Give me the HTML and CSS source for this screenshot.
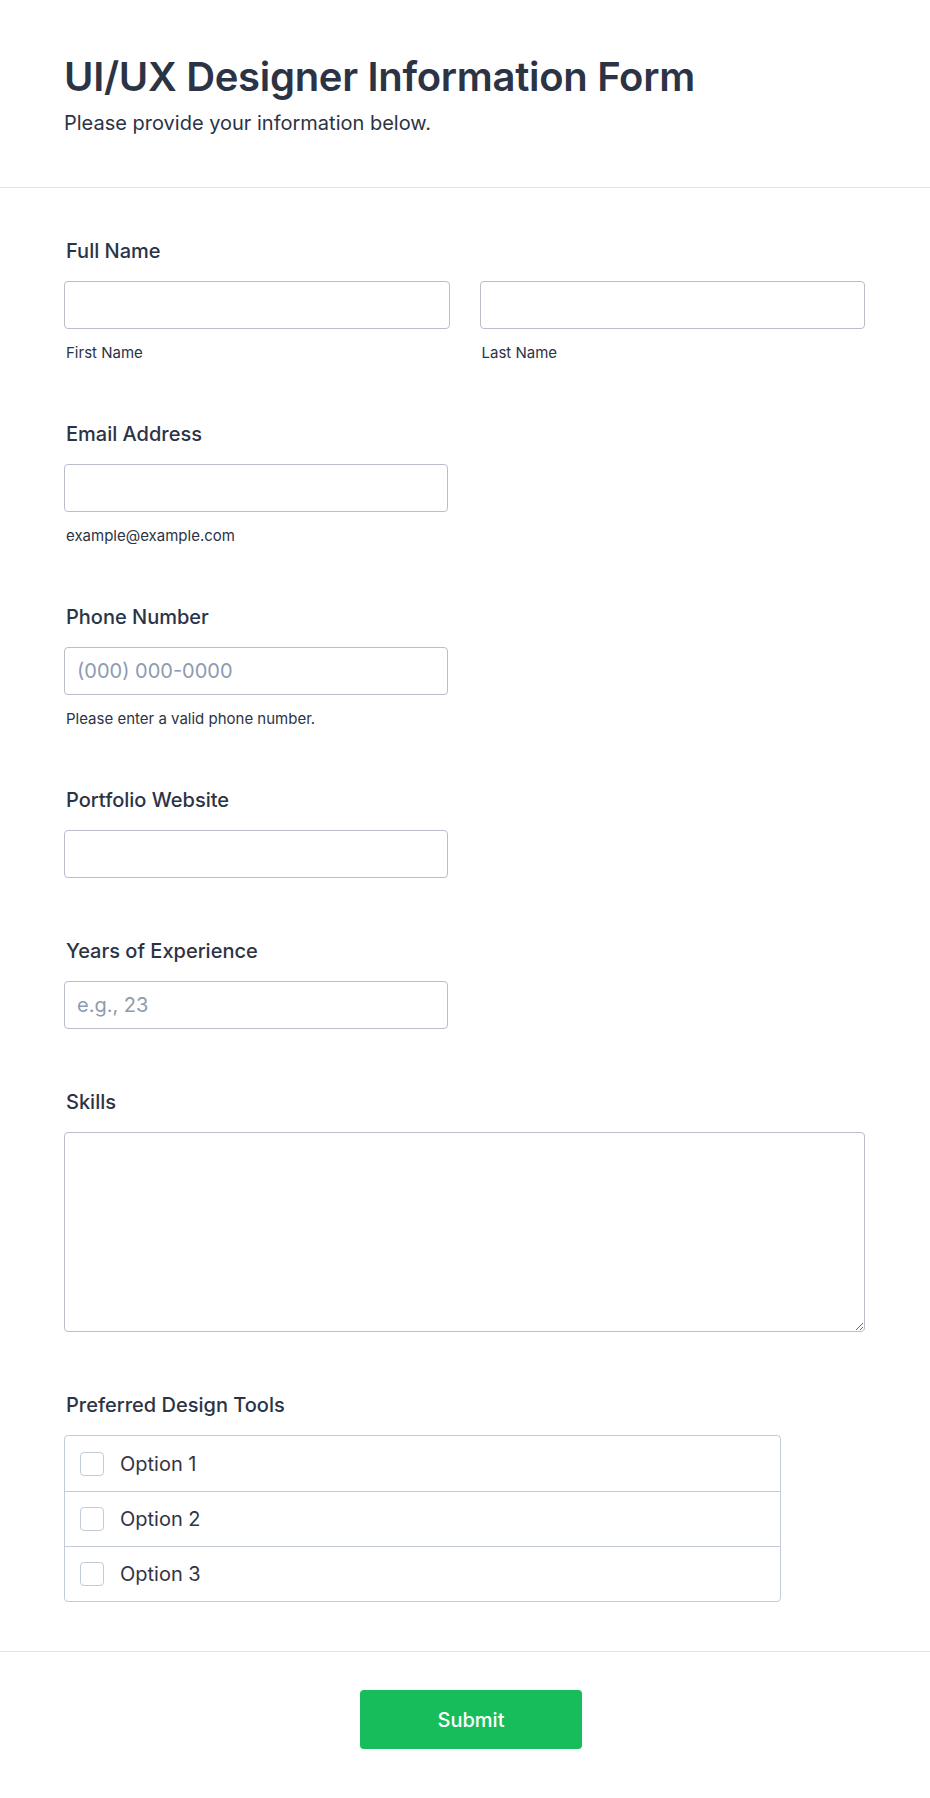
FILE: index.html
```html
<!DOCTYPE html>
<html lang="en">

<head>
    <meta charset="UTF-8">
    <meta name="viewport" content="width=device-width, initial-scale=1.0">
    <title>UI/UX Designer Information Form</title>
    <link rel="stylesheet" href="styles.css">
</head>

<body>

    <header class="form-header">
        <h1>UI/UX Designer Information Form</h1>
        <p>Please provide your information below.</p>
    </header>

    <form class="form-body">
        <div class="field">
            <label class="field-label">Full Name</label>
            <div class="name-row">
                <div>
                    <input type="text" class="text-input">
                    <span class="sublabel">First Name</span>
                </div>
                <div>
                    <input type="text" class="text-input">
                    <span class="sublabel">Last Name</span>
                </div>
            </div>
        </div>

        <div class="field">
            <label class="field-label">Email Address</label>
            <input type="email" class="text-input short">
            <span class="sublabel">example@example.com</span>
        </div>

        <div class="field">
            <label class="field-label">Phone Number</label>
            <input type="tel" class="text-input short" placeholder="(000) 000-0000">
            <span class="sublabel">Please enter a valid phone number.</span>
        </div>

        <div class="field">
            <label class="field-label">Portfolio Website</label>
            <input type="url" class="text-input short">
        </div>

        <div class="field">
            <label class="field-label">Years of Experience</label>
            <input type="text" class="text-input short" placeholder="e.g., 23">
        </div>

        <div class="field">
            <label class="field-label">Skills</label>
            <textarea class="text-area"></textarea>
        </div>

        <div class="field">
            <label class="field-label">Preferred Design Tools</label>
            <div class="check-list">
                <label class="check-row"><input type="checkbox"><span class="box"></span>Option 1</label>
                <label class="check-row"><input type="checkbox"><span class="box"></span>Option 2</label>
                <label class="check-row"><input type="checkbox"><span class="box"></span>Option 3</label>
            </div>
        </div>
    </form>

    <footer class="form-footer">
        <button type="button" class="submit-btn">Submit</button>
    </footer>

</body>

</html>
```

FILE: styles.css
```css
* {
    box-sizing: border-box;
}

body {
    margin: 0;
    background-color: #fff;
    color: #2c3345;
    font-family: Inter, "Noto Sans", sans-serif;
}

.form-header {
    padding: 53px 64px 52px;
    border-bottom: 1px solid #dfe3ec;
}

.form-header h1 {
    margin: 0;
    font-size: 40px;
    line-height: 48px;
    font-weight: 600;
    letter-spacing: -0.3px;
}

.form-header p {
    margin: 10px 0 0;
    font-size: 20px;
    line-height: 24px;
    font-weight: 400;
}

.form-body {
    padding: 51px 65px 49px 64px;
}

.field + .field {
    margin-top: 61px;
}

.field-label {
    display: block;
    margin: 0 0 18px 2px;
    font-size: 20px;
    line-height: 24px;
    font-weight: 500;
}

.name-row {
    display: grid;
    grid-template-columns: 1fr 1fr;
    gap: 30px;
}

.text-input {
    display: block;
    width: 100%;
    height: 48px;
    padding: 0 12px;
    border: 1px solid #b8bdc9;
    border-radius: 4px;
    font-family: inherit;
    font-size: 20px;
    color: #2c3345;
}

.text-input.short {
    width: 384px;
}

.text-input::placeholder {
    color: #8d9bb0;
}

.sublabel {
    display: block;
    margin: 15px 0 -1px 2px;
    font-size: 15px;
    line-height: 18px;
}

.text-area {
    display: block;
    width: 100%;
    height: 200px;
    border: 1px solid #b8bdc9;
    border-radius: 4px;
    font-family: inherit;
    font-size: 18px;
}

.check-list {
    width: 717px;
    border: 1px solid #c3cad8;
    border-radius: 4px;
}

.check-row {
    display: flex;
    align-items: center;
    height: 55px;
    padding-left: 15px;
    font-size: 20px;
    color: #343446;
}

.check-row + .check-row {
    border-top: 1px solid #c3cad8;
}

.check-row input {
    display: none;
}

.box {
    width: 24px;
    height: 24px;
    margin-right: 16px;
    border: 1px solid #c3cad8;
    border-radius: 4px;
}

.form-footer {
    display: flex;
    justify-content: center;
    padding: 38px 0 50px 12px;
    border-top: 1px solid #dfe3ec;
}

.submit-btn {
    width: 222px;
    height: 59px;
    border: none;
    border-radius: 4px;
    background-color: #18bd5b;
    color: #fff;
    font-family: inherit;
    font-size: 20px;
    font-weight: 500;
    cursor: pointer;
}
```
